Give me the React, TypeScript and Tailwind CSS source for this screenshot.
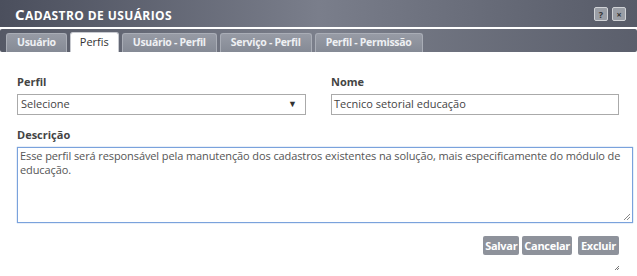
import React from "react";

const tabs = ["Usuário", "Perfis", "Usuário - Perfil", "Serviço - Perfil", "Perfil - Permissão"];

function Tab({ label, active }: { label: string; active: boolean }) {
  if (active) {
    return (
      <div className="flex h-[20px] items-center rounded-t-[3px] border border-b-0 border-[#c8cad0] bg-white px-[9px] text-[11px] text-[#333]">
        {label}
      </div>
    );
  }
  return (
    <div className="flex h-[19px] items-center rounded-t-[3px] border border-b-0 border-[#a9adb6] bg-gradient-to-b from-[#979ba5] to-[#858a95] px-[10px] text-[10.5px] font-bold tracking-[-0.3px] text-[#eef0f3]">
      {label}
    </div>
  );
}

export default function App() {
  return (
    <div className="h-[276px] w-[637px] bg-white font-['Open_Sans',sans-serif] text-[#333]">
      {/* title bar */}
      <div className="flex h-[27px] items-center justify-between bg-gradient-to-r from-[#4b4f5d] via-[#7a7e8b] to-[#575b68] pl-[15px] pr-[11px]">
        <span className="font-bold uppercase tracking-[0.4px] text-white">
          <span className="text-[15px]">C</span>
          <span className="text-[12px]">adastro de usuários</span>
        </span>
        <div className="flex gap-[4px] pt-[1px]">
          <div className="flex h-[14px] w-[14px] items-center justify-center rounded-[2px] border border-[#d0d2d6] bg-[#9a9ea6] text-[9px] font-bold leading-none text-[#333]">
            ?
          </div>
          <div className="flex h-[14px] w-[14px] items-center justify-center rounded-[2px] border border-[#d0d2d6] bg-[#9a9ea6] text-[9px] font-bold leading-none text-[#333]">
            ×
          </div>
        </div>
      </div>
      {/* tab bar */}
      <div className="mt-[2px] flex h-[23px] items-end gap-[3px] rounded-[2px] bg-gradient-to-r from-[#555966] via-[#7b7f8b] to-[#5b5f6c] pl-[6px]">
        {tabs.map((t) => (
          <Tab key={t} label={t} active={t === "Perfis"} />
        ))}
      </div>

      {/* form */}
      <div className="px-[17px] pt-[22px]">
        <div className="flex gap-[25px]">
          <div className="w-[289px]">
            <div className="text-[11px] font-bold text-[#444]">Perfil</div>
            <div className="mt-[3px] flex h-[21px] items-center justify-between border border-[#aaa] pl-[3px] pr-[8px] text-[11px] text-[#444]">
              <span>Selecione</span>
              <span className="text-[9px] text-[#333]">▼</span>
            </div>
          </div>
          <div className="w-[288px]">
            <div className="text-[11px] font-bold text-[#444]">Nome</div>
            <div className="mt-[3px] flex h-[21px] items-center border border-[#aaa] pl-[2px] text-[11px] text-[#444]">
              Tecnico setorial educação
            </div>
          </div>
        </div>
        <div className="mt-[12px] text-[11px] font-bold text-[#444]">Descrição</div>
        <div className="relative mt-[4px] h-[76px] w-[616px] border border-[#7aa2dc] px-[2px] py-[1px] text-[11px] leading-[14px] tracking-[-0.1px] text-[#555] shadow-[0_0_1px_#7aa2dc]">
          Esse perfil será responsável pela manutenção dos cadastros existentes na solução, mais especificamente do módulo de educação.
          <svg className="absolute bottom-[1px] right-[1px]" width="8" height="8" viewBox="0 0 8 8">
            <path d="M7 1 L1 7 M7 4 L4 7" stroke="#888" strokeWidth="1" />
          </svg>
        </div>
        <div className="mt-[13px] flex justify-end gap-[3px] pr-[1px]">
          <button className="h-[19px] rounded-[2px] bg-[#8e929b] px-[2px] text-[11px] font-bold leading-none tracking-[-0.3px] text-white">Salvar</button>
          <button className="h-[19px] rounded-[2px] bg-[#8e929b] px-[2px] text-[11px] font-bold leading-none tracking-[-0.3px] text-white">Cancelar</button>
          <button className="ml-[3px] h-[19px] rounded-[2px] bg-[#8e929b] px-[3px] text-[11px] font-bold leading-none tracking-[-0.3px] text-white">Excluir</button>
        </div>
        <div className="flex justify-end pt-[10px]">
          <svg width="6" height="6" viewBox="0 0 6 6">
            <path d="M5 1 L1 5 M5 3 L3 5" stroke="#777" strokeWidth="1" />
          </svg>
        </div>
      </div>
    </div>
  );
}
